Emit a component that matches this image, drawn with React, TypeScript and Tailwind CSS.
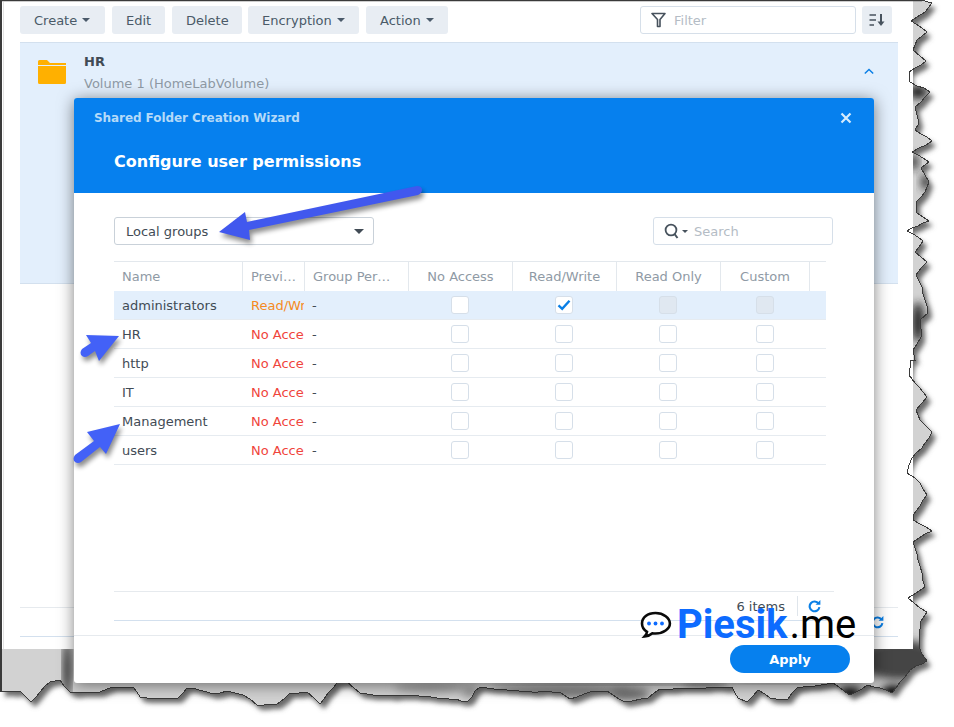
import React from "react";

const edge: [number, number][] = [
  [921,0],[932,3],[925,12],[911,21],[927,32],[917,40],[913,50],[926,61],[909,72],[910,82],[930,92],[915,107],[919,123],[915,130],[932,141],[912,152],[929,162],[921,168],[929,182],[925,192],[916,202],[917,213],[929,221],[907,231],[923,241],[915,252],[927,262],[916,275],[922,287],[928,313],[920,320],[921,337],[913,350],[915,360],[911,360],[909,375],[915,383],[927,397],[916,410],[920,420],[932,432],[922,448],[912,458],[907,473],[915,478],[927,495],[913,515],[913,520],[932,531],[913,542],[918,560],[925,587],[908,598],[927,612],[920,623],[919,647],[927,661],[910,670],[900,682],[892,693],[880,688],[867,685],[850,695],[833,683],[797,688],[788,699],[770,698],[758,690],[747,702],[738,698],[732,687],[693,688],[660,689],[648,698],[625,702],[607,691],[590,692],[570,699],[560,692],[538,692],[507,690],[480,687],[468,701],[407,695],[373,695],[360,693],[347,682],[337,683],[320,704],[307,692],[290,693],[277,704],[257,705],[243,695],[227,691],[213,694],[193,688],[187,688],[178,698],[153,698],[140,697],[133,687],[113,687],[100,692],[70,692],[60,680],[50,682],[40,692],[31,702],[20,691],[1,692],
];

function tornPath(): string {
  let seed = 7;
  const rnd = () => {
    seed = (seed * 16807) % 2147483647;
    return seed / 2147483647 - 0.5;
  };
  const pts: string[] = [];
  edge.forEach((p, i) => {
    const q = edge[i + 1];
    pts.push(`${p[0]},${p[1]}`);
    if (!q) return;
    const len = Math.hypot(q[0] - p[0], q[1] - p[1]);
    const n = Math.floor(len / 6);
    for (let k = 1; k < n; k++) {
      const t = k / n;
      pts.push(`${Math.round(p[0] + (q[0] - p[0]) * t + rnd() * 1.2)},${Math.round(p[1] + (q[1] - p[1]) * t + rnd() * 1.2)}`);
    }
  });
  return `M1,0 L${pts.join(" L")} L1,692 Z`;
}
const torn = tornPath();

const blobs: [number, number, number, number, string][] = [
  [918,92,10,7,"#222"],[914,162,4,8,"#222"],[926,182,5,8,"#333"],[918,322,6,20,"#222"],
  [67,670,3,30,"#000"],
  [900,660,40,20,"#444"],[893,692,12,7,"#000"],[850,693,12,6,"#000"],[790,683,60,1,"#666"],
  [560,692,70,6,"#777"],[630,694,20,6,"#666"],[430,688,36,5,"#999"],[470,692,8,5,"#888"],
  [610,684,120,1,"#555"],[705,685,24,2,"#444"],
];

function TornEdge() {
  return (
    <svg className="absolute left-0 top-0" width={954} height={727} viewBox="0 0 954 727">
      <defs>
        <filter id="sh" x="-5%" y="-5%" width="110%" height="110%"><feGaussianBlur stdDeviation="2.6" /></filter>
        <filter id="bl" x="-50%" y="-50%" width="200%" height="200%"><feGaussianBlur stdDeviation="4" /></filter>
        <clipPath id="cp"><path d={torn} /></clipPath>
      </defs>
      <path d={torn} fill="#6a6a6a" transform="translate(4,5)" filter="url(#sh)" />
      <path d={torn} fill="#d2d2d2" />
      <g clipPath="url(#cp)">
        {blobs.map((b, i) => (
          <ellipse key={i} cx={b[0]} cy={b[1]} rx={b[2]} ry={b[3]} fill={b[4]} filter="url(#bl)" />
        ))}
      </g>
    </svg>
  );
}

function TornStroke() {
  return (
    <svg className="absolute left-0 top-0 pointer-events-none" width={954} height={727} viewBox="0 0 954 727">
      <path d={torn} fill="none" stroke="#3a3a3a" strokeWidth={1} shapeRendering="crispEdges" />
      <path d="M0.5,0 V692" stroke="#3a3a3a" strokeWidth={2} />
      <path d="M3.5,2 V649" stroke="#e2e2e2" strokeWidth={1} />
      <path d="M0,0.5 H922" stroke="#3a3a3a" strokeWidth={1.5} />
    </svg>
  );
}

function Caret() {
  return <span className="inline-block w-0 h-0 border-x-[4px] border-x-transparent border-t-[4px] border-t-[#4a5a6a]" />;
}

function ToolButton({ label, w, caret }: { label: string; w: string; caret?: boolean }) {
  return (
    <div className={`${w} h-7 rounded-[3px] bg-[#e8edf3] flex items-center gap-[5px] pl-[14px] text-[13px] text-[#4a5a68]`}>
      <span className="translate-y-px">{label}</span>
      {caret && <Caret />}
    </div>
  );
}

function Refresh({ className }: { className: string }) {
  return (
    <svg className={className} width={13} height={13} viewBox="0 0 13 13" fill="none">
      <path d="M10.6 3.6A4.9 4.9 0 1 0 11.4 7.2" stroke="#0a7fe6" strokeWidth={2.1} />
      <path d="M7.6 4.8H12.4V0Z" fill="#0a7fe6" />
    </svg>
  );
}

function Box({ state }: { state?: "checked" | "disabled" | "white" }) {
  const bg = state === "disabled" ? "bg-[#e0e8f1]" : "bg-white";
  return (
    <div className={`w-[18px] h-[18px] rounded-[3px] border border-[#d6dfe9] ${bg} flex items-center justify-center`}>
      {state === "checked" && (
        <svg width={14} height={12} viewBox="0 0 14 12" fill="none">
          <path d="M1.5 6.3L5.2 9.8L12.5 1.8" stroke="#0a7fe6" strokeWidth={2.4} />
        </svg>
      )}
    </div>
  );
}

const colCls = ["w-[129px]", "w-[62px]", "w-[104px]", "w-[104px]", "w-[104px]", "w-[104px]", "w-[89px]", "w-[16px]"];
const heads = ["Name", "Previous...", "Group Permissions", "No Access", "Read/Write", "Read Only", "Custom", ""];

const groups = [
  { name: "administrators", prev: "Read/Write", sel: true },
  { name: "HR", prev: "No Access" },
  { name: "http", prev: "No Access" },
  { name: "IT", prev: "No Access" },
  { name: "Management", prev: "No Access" },
  { name: "users", prev: "No Access" },
];

function Arrows() {
  return (
    <svg className="absolute left-0 top-0 pointer-events-none" width={954} height={727} viewBox="0 0 954 727">
      <defs>
        <filter id="as" x="-20%" y="-20%" width="140%" height="140%"><feGaussianBlur stdDeviation="2.5" /></filter>
      </defs>
      {[
        { d: "M219,232 L245,212 L247,222 L417,186 Q422,186 422,190 Q422,193 418,195 L249,230 L250,240 Z", f: "#4158ee" },
        { d: "M119,336 L86,335 L91,343 L82,349 Q79,353 82,356 Q85,358 88,356 L95,351 L99,361 Z", f: "#4361f7" },
        { d: "M120,424 L87,432 L94,441 L75,455 Q72,459 75,462 Q78,464 81,462 L100,447 L106,454 Z", f: "#4361f7" },
      ].map((a, i) => (
        <g key={i}>
          <path d={a.d} fill="#000" opacity={0.45} transform="translate(2,4)" filter="url(#as)" />
          <path d={a.d} fill={a.f} />
        </g>
      ))}
    </svg>
  );
}

export default function App() {
  return (
    <div className="relative w-[954px] h-[727px] overflow-hidden bg-white font-['DejaVu_Sans',sans-serif]">
      <TornEdge />

      {/* underlying window */}
      <div className="relative w-[913px] h-[649px] bg-white pl-5 pr-[15px] pt-1.5 flex flex-col">
        <div className="flex h-7 pr-1.5">
          <ToolButton label="Create" w="w-[85px]" caret />
          <div className="ml-[7px]"><ToolButton label="Edit" w="w-[53px]" /></div>
          <div className="ml-[7px]"><ToolButton label="Delete" w="w-[70px]" /></div>
          <div className="ml-[6px]"><ToolButton label="Encryption" w="w-[111px]" caret /></div>
          <div className="ml-[7px]"><ToolButton label="Action" w="w-[82px]" caret /></div>
          <div className="ml-auto w-[216px] h-7 rounded-[3px] border border-[#d6dfe9] flex items-center pl-[10px] gap-2 text-[13px] text-[#b4bcc5]">
            <svg width={15} height={16} viewBox="0 0 15 16" fill="none">
              <path d="M1 1.500H14L9 7.500V14.500H6.500V7.500Z" stroke="#47525d" strokeWidth={1.6} strokeLinejoin="round" fill="none" />
            </svg>
            <span className="translate-y-px">Filter</span>
          </div>
          <div className="w-[30px] h-7 ml-1.5 rounded-[3px] bg-[#e8edf3] flex items-center justify-center">
            <svg width={16} height={12} viewBox="0 0 16 12" fill="none">
              <path d="M0.500 1H7M0.500 6H7M0.500 11H5" stroke="#47525d" strokeWidth={1.6} />
              <path d="M12 0V8" stroke="#47525d" strokeWidth={2} />
              <path d="M8.500 7.500H15.500L12 12Z" fill="#47525d" />
            </svg>
          </div>
        </div>

        <div className="relative mt-2 h-[242px] bg-[#e3effc] border-y border-[#d3e0ee] flex items-start">
          <svg className="ml-[18px] mt-[17px]" width={28} height={24} viewBox="0 0 28 24">
            <path d="M0 1.500A1.500 1.500 0 0 1 1.500 0H9L12 3H28V5H0Z" fill="#ffb000" />
            <path d="M0 6H28V22.500A1.500 1.500 0 0 1 26.500 24H1.500A1.500 1.500 0 0 1 0 22.500Z" fill="#ffb000" />
          </svg>
          <div className="ml-[18px] mt-[11px] flex flex-col flex-1">
            <span className="text-[13px] leading-4 font-bold text-[#414b55]">HR</span>
            <span className="mt-1.5 text-[13px] leading-4 text-[#8f9aa5]">Volume 1 (HomeLabVolume)</span>
          </div>
          <svg className="mr-[24px] mt-[25px]" width={10} height={7} viewBox="0 0 10 7" fill="none">
            <path d="M0.800 5.500L5 1.500L9.200 5.500" stroke="#0a7fe6" strokeWidth={1.5} />
          </svg>
        </div>

        <div className="mt-auto mb-[12px] h-[30px] border-y border-t-[#e6eaee] border-b-[#d3e0ee] flex items-center justify-end pr-[14px]">
          <Refresh className="" />
        </div>
      </div>

      <TornStroke />

      {/* wizard dialog */}
      <div className="absolute left-[74px] top-[98px] w-[800px] h-[585px] bg-white rounded-[3px] flex flex-col shadow-[0_2px_16px_rgba(0,0,0,0.5)]">
        <div className="h-[95px] bg-[#0680ee] rounded-t-[3px] shrink-0 relative">
          <div className="pl-5 pt-[12px] text-[12px] leading-4 font-bold tracking-[-0.07px] text-[#b4daf9]">Shared Folder Creation Wizard</div>
          <div className="pl-10 pt-[26px] text-[16px] leading-5 font-bold text-white">Configure user permissions</div>
          <svg className="absolute right-[22px] top-[14px]" width={12} height={12} viewBox="0 0 12 12" fill="none">
            <path d="M1.500 1.500L10.500 10.500M10.500 1.500L1.500 10.500" stroke="#d5ebfd" strokeWidth={2.2} />
          </svg>
        </div>

        <div className="flex-1 flex flex-col pl-10 pt-6 pr-[40px]">
          <div className="flex justify-between h-7 pr-px">
            <div className="w-[260px] h-7 rounded-[3px] border border-[#c9d1d9] flex items-center justify-between pl-[11px] pr-[9px] text-[13px] text-[#414b55]">
              <span className="translate-y-px">Local groups</span>
              <span className="inline-block w-0 h-0 border-x-[5px] border-x-transparent border-t-[5px] border-t-[#414b55]" />
            </div>
            <div className="w-[180px] h-7 rounded-[3px] border border-[#d6dfe9] flex items-center pl-[10px] text-[13px] text-[#b4bcc5]">
              <svg width={16} height={16} viewBox="0 0 16 16" fill="none">
                <circle cx={7} cy={7} r={5.400} stroke="#47525d" strokeWidth={1.8} />
                <path d="M10.500 11L13.500 15" stroke="#47525d" strokeWidth={2} />
              </svg>
              <span className="ml-[2px] inline-block w-0 h-0 border-x-[3.5px] border-x-transparent border-t-[3.5px] border-t-[#47525d]" />
              <span className="ml-[6px] translate-y-px">Search</span>
            </div>
          </div>

          <div className="mt-4 w-[712px]">
            <div className="flex h-[30px] border-t border-[#e3e8ed] text-[13px] text-[#8f9aa5]">
              {heads.map((h, i) => (
                <div
                  key={i}
                  className={`${colCls[i]} shrink-0 border-r h-[29px] ${i === 7 ? "border-transparent" : "border-[#e3e8ed]"} ${
                    i < 3 ? "px-2 truncate text-left" : "text-center"
                  } leading-[29px]`}
                >
                  {h}
                </div>
              ))}
            </div>
            {groups.map((g) => (
              <div key={g.name} className={`flex h-[29px] border-b border-[#e6ebf0] text-[13px] ${g.sel ? "bg-[#e3effc]" : ""}`}>
                <div className={`${colCls[0]} pl-2 leading-[29px] text-[#414b55]`}>{g.name}</div>
                <div className={`${colCls[1]} pl-2 leading-[29px]`}>
                  <div className={`w-[53px] overflow-hidden whitespace-nowrap ${g.sel ? "text-[#f58a23]" : "text-[#f0453c]"}`}>{g.prev}</div>
                </div>
                <div className={`${colCls[2]} pl-[7px] leading-[29px] text-[#414b55]`}>-</div>
                <div className={`${colCls[3]} pr-[2px] flex items-center justify-center`}><Box /></div>
                <div className={`${colCls[4]} pr-[2px] flex items-center justify-center`}><Box state={g.sel ? "checked" : undefined} /></div>
                <div className={`${colCls[5]} pr-[2px] flex items-center justify-center`}><Box state={g.sel ? "disabled" : undefined} /></div>
                <div className={`${colCls[6]} pr-[2px] flex items-center justify-center`}><Box state={g.sel ? "disabled" : undefined} /></div>
              </div>
            ))}
          </div>

          <div className="mt-auto mb-[14px] h-[30px] border-y border-t-[#e6eaee] border-b-[#d3e0ee] flex items-center justify-end">
            <span className="text-[13px] text-[#414b55] translate-y-px">6 items</span>
            <span className="ml-[12px] w-px h-[20px] bg-[#dfe5eb]" />
            <Refresh className="ml-[10px] mr-[13px]" />
          </div>
        </div>

        <div className="h-[48px] shrink-0 border-t border-[#e6eaee] flex justify-end pt-[9px] pr-6">
          <div className="w-[120px] h-7 rounded-full bg-[#0680ee] text-white text-[13px] font-bold flex items-center justify-center">
            <span className="translate-y-px">Apply</span>
          </div>
        </div>
      </div>

      <Arrows />

      {/* watermark */}
      <div className="absolute left-[640px] top-[601px] flex items-center h-[48px]">
        <svg width={32} height={28} viewBox="0 0 32 28" fill="none">
          <path d="M15.500 2C7.500 2 2 6.500 2 12.500c0 3.600 2 6.500 5 8.300-.2 1.700-1 3.200-2.400 4.700 3.200-.2 5.800-1.400 7.800-3.200 1 .2 2 .2 3 .2 8 0 14.500-4.600 14.500-10S23.500 2 15.500 2Z" stroke="#0a0a0a" strokeWidth={2.6} fill="#fff" />
          <circle cx={9} cy={12.500} r={1.900} fill="#0d6bff" />
          <circle cx={15.500} cy={12.500} r={1.900} fill="#0d6bff" />
          <circle cx={22} cy={12.500} r={1.900} fill="#0d6bff" />
        </svg>
        <span className="ml-[5px] font-['Roboto',sans-serif] font-bold text-[40px] leading-[48px] text-[#0d6bff]">Piesik</span>
        <span className="ml-[2px] font-['Roboto',sans-serif] text-[40px] leading-[48px] text-black">.me</span>
      </div>
    </div>
  );
}
